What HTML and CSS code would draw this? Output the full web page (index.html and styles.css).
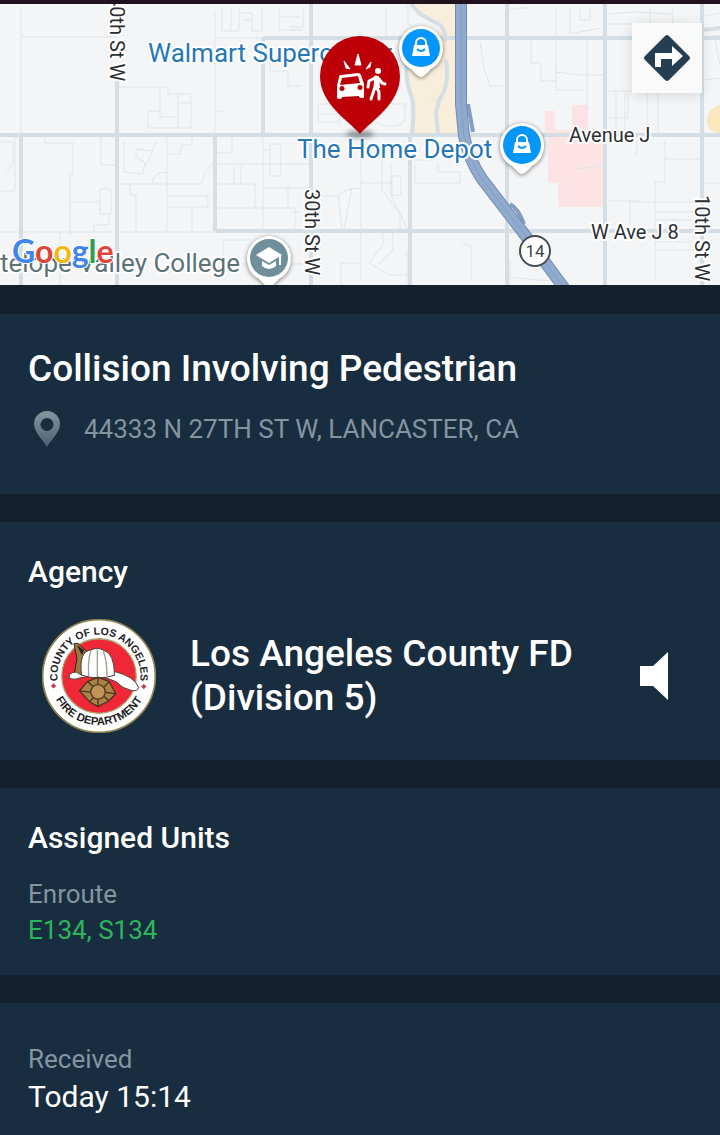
FILE: index.html
```html
<!DOCTYPE html>
<html lang="en">
<head>
    <meta charset="utf-8">
    <meta name="viewport" content="width=device-width, initial-scale=1">
    <title>Incident</title>
    <link rel="stylesheet" href="styles.css">
</head>
<body>
    <div class="map">
        <svg class="map-canvas" viewBox="0 4 720 281" role="img" aria-label="Map">
            <defs>
                <g id="shop-pin">
                    <path class="poi-shape" d="M0 29C-3 29-6 25-10 21C-18 17-22 9-22 0A22 22 0 0 1 22 0C22 9 18 17 10 21C6 25 3 29 0 29Z"/>
                    <circle r="19" fill="#0596fb"/>
                    <path d="M-7-3H7L9 8H-9Z" fill="#fff"/>
                    <path d="M-5-2V-5A5 5 0 0 1 5-5V-2" fill="none" stroke="#fff" stroke-width="2"/>
                    <path d="M-4 1Q0 5 4 1" fill="none" stroke="#0596fb" stroke-width="2"/>
                </g>
                <filter id="blur" x="-50%" y="-100%" width="200%" height="300%">
                    <feGaussianBlur stdDeviation="2.5"/>
                </filter>
            </defs>

            <rect y="4" width="720" height="281" fill="#f4f5f6"/>

            <!-- areas -->
            <path d="M411 4H456V100L458 135H409L412 105L407 85L409 60L440 28Z" fill="#f7eedb"/>
            <path d="M545 111H555V130H572V105H588V135H604V207H558V183H548V135H545Z" fill="#fde3e3"/>
            <path d="M720 105Q708 108 707 120Q707 131 720 134Z" fill="#fbe7bd"/>

            <!-- minor streets -->
            <g class="street">
                <path d="M21 8V135M21 37H117M119 87H168V94H191V128H148V111H160M160 87V117H178M178 94V128M178 103H191M215 13V135M215 111H224M215 38H263M222 8V31H239V8M231 8V31M241 13H252V31H262V8M252 20H243M279 8V30H300M279 17H300M270 62V71H288V86H300"/>
                <path d="M45 136V143H73V174H70V235M70 202H99M100 189H111V214H100ZM109 214V225H94V232M0 142H13V165L5 172M15 135V191H0M101 135V165H115M124 140V172L143 174L145 163L136 157V149L153 151M156 140Q152 157 144 167M152 183Q153 172 167 172M167 135V231M117 184H201L205 173L213 163M130 184V195H136V231M120 232H215M0 232H117M167 196H208V207H167M192 207V231M167 154H181V145H192V138"/>
                <path d="M217 153H232V135M217 164H300M234 166V184M241 166V184M255 184V208M217 184H255M263 135V231M217 208H295V231M263 188H311M270 144H281V176H270ZM263 150H270M288 188V208M223 264V240H252M60 232V285M223 264H311"/>
                <path d="M290 27H303V8M290 30H303M386 8V35L389 38M318 104H340V122H318ZM317 114H350M319 86H340M375 122Q395 132 405 120V104H380M315 196H338L342 230M338 196Q345 188 360 188M352 188L344 230M361 150V280M361 183H392M382 150V190L400 214V231M391 165V195L408 230M383 231V245L369 263M393 231V250L378 265M392 176H401V195H392ZM415 165V183H460V172H438V163M341 285V263H360M369 263L390 275H410M462 245H471V280"/>
                <path d="M480 42L484 68L490 86H507M510 10Q520 7 528 8M531 40V63H541V81H556M556 8V90H584M556 72L580 75H603M570 8V34L600 28M580 8V20H590V8M587 40V110M608 14L635 12L672 14M608 24H632M650 8V24M673 8V30M608 91H702M616 91V135M625 91V135M608 118H628V91M658 91V135M647 91V135M705 16L720 13M708 37L720 35M714 35L720 65M705 80L720 78"/>
                <path d="M576 169L602 166M637 140V155M665 140V182H655V280M630 202H702M630 202V225M655 212H695M655 220H695M655 242H695M655 250H695M665 159H702M702 183H720M608 201H640M414 160H430M290 212H300M290 164H311M507 277L550 281M510 260V285"/>
                <path d="M408 4V24L420 33M430 100H446M407 250V285"/>
            </g>

            <!-- main roads -->
            <g class="road">
                <path d="M263 38H720M0 135H720M215 231H720"/>
                <path d="M21 135V285M117 80V285M215 135V231M263 38V135M311 4V285M410 135V285M507 4V285M605 4V285M702 4V285"/>
                <path d="M411 4L420 14L440 25Q446 30 445 42M407 62Q405 80 411 95Q415 105 412 135M446 60Q450 85 440 98L436 112L438 135"/>
                <path d="M702 30L720 28"/>
            </g>

            <!-- highway -->
            <path class="ramp" d="M458 104L461 138M468 104L473 132M510 204Q518 208 524 224"/>
            <path class="highway-edge" d="M461 4V104L464 136Q469 160 482 179L525 235L567 292"/>
            <path class="highway" d="M461 4V104L464 136Q469 160 482 179L525 235L567 292"/>
            <path class="highway-edge divider" d="M461 4V104L464 136Q469 160 482 179L525 235L567 292"/>

            <!-- labels -->
            <text class="road-label" transform="translate(110 -5) rotate(90)">40th St W</text>
            <text class="road-label" transform="translate(305 189) rotate(90)">30th St W</text>
            <text class="road-label" transform="translate(695 195) rotate(90)">10th St W</text>
            <text class="road-label" x="569" y="142">Avenue J</text>
            <text class="road-label" x="591" y="239">W Ave J 8</text>
            <text class="place-label shop" x="148" y="62">Walmart Supercenter</text>
            <text class="place-label shop" x="297" y="158">The Home Depot</text>
            <text class="place-label school" x="240" y="272" text-anchor="end">Antelope Valley College</text>

            <circle cx="535" cy="251" r="15" fill="#fff" stroke="#444c50" stroke-width="2"/>
            <text class="shield" x="535" y="257" text-anchor="middle">14</text>

            <use href="#shop-pin" x="421" y="48"/>
            <use href="#shop-pin" x="522" y="145"/>

            <g transform="translate(269 258)">
                <path class="poi-shape" d="M0 29C-3 29-6 25-10 21C-18 17-22 9-22 0A22 22 0 0 1 22 0C22 9 18 17 10 21C6 25 3 29 0 29Z"/>
                <circle r="19" fill="#6f909b"/>
                <path d="M-13-3L0-11L13-3L0 5Z" fill="#fff"/>
                <path d="M-7 3L0 7L7 3V8Q0 14-7 8Z" fill="#fff"/>
                <path d="M11-3V7" stroke="#fff" stroke-width="2"/>
            </g>

            <!-- incident marker -->
            <ellipse cx="360" cy="134" rx="14" ry="4" fill="#000" opacity=".35" filter="url(#blur)"/>
            <path d="M360 134C348 120 320 104 320 76A40 40 0 0 1 400 76C400 104 372 120 360 134Z" fill="#bd0008"/>
            <g fill="#fff">
                <path d="M344 61L350 69L346 68ZM358 54L361 65H355ZM371 62L370 67L366 69Z" stroke="#fff"/>
                <path fill-rule="evenodd" d="M341 75L358 73Q360 73 361 75L364 84V97Q364 98 362 98Q359 98 359 96L342 97V98Q341 99 339 99Q337 99 337 97V86L339 77Q339 75 341 75ZM342 78L340 85L360 83L358 76ZM342 86A2 2 0 1 0 342 91A2 2 0 1 0 342 86ZM360 85A2 2 0 1 0 360 90A2 2 0 1 0 360 85Z"/>
                <circle cx="378" cy="71" r="3"/>
            </g>
            <path d="M376 77L375 87L371 99M377 88L379 92V99M375 78L369 81L368 87M379 79L382 83L385 84" fill="none" stroke="#fff" stroke-width="3" stroke-linecap="round" stroke-linejoin="round"/>
            <path d="M374 76H379L380 88H374Z" fill="#fff"/>

            <text class="google" x="12" y="263"><tspan fill="#4285e8">G</tspan><tspan fill="#de4437">o</tspan><tspan fill="#f0b910">o</tspan><tspan fill="#4285e8">g</tspan><tspan fill="#2f9e4f">l</tspan><tspan fill="#de4437">e</tspan></text>
        </svg>

        <button type="button" class="directions" aria-label="Directions">
            <svg width="48" height="48" viewBox="0 0 48 48">
                <path d="M22 2Q24 0 26 2L46 22Q48 24 46 26L26 46Q24 48 22 46L2 26Q0 24 2 22Z" fill="#263e52"/>
                <path d="M12 33V19H29V12L40 22L29 32V25H18V33Z" fill="#fff"/>
            </svg>
        </button>
    </div>

    <main class="details">
        <section class="card incident">
            <h1>Collision Involving Pedestrian</h1>
            <p class="address">
                <svg width="26" height="36" viewBox="0 0 26 36" aria-hidden="true">
                    <defs>
                        <linearGradient id="pin-fade" x1="0" y1="0" x2="0" y2="1">
                            <stop offset="0" stop-color="#8795a1"/>
                            <stop offset="1" stop-color="#4a6071"/>
                        </linearGradient>
                    </defs>
                    <path fill="url(#pin-fade)" fill-rule="evenodd" d="M13 0A13 13 0 0 1 26 13C26 21 17 29 13 36C9 29 0 21 0 13A13 13 0 0 1 13 0ZM13 7A6 6 0 1 0 13 20A6 6 0 1 0 13 7Z"/>
                </svg>
                <span>44333 N 27TH ST W, LANCASTER, CA</span>
            </p>
        </section>

        <section class="card agency">
            <h2>Agency</h2>
            <div class="agency-row">
                <svg class="seal" viewBox="0 0 346 346" role="img" aria-label="Department seal">
                    <defs>
                        <path id="arc-top" d="M51 205A126 126 0 1 1 295 205"/>
                        <path id="arc-bottom" d="M24 173A149 149 0 0 0 322 173"/>
                    </defs>
                    <circle cx="173" cy="173" r="171" fill="#fff" stroke="#8d8555" stroke-width="5"/>
                    <circle cx="173" cy="173" r="113" fill="#f02736" stroke="#b0a070" stroke-width="4"/>
                    <text class="seal-text"><textPath href="#arc-top" startOffset="50%" text-anchor="middle">COUNTY OF LOS ANGELES</textPath></text>
                    <text class="seal-text lower"><textPath href="#arc-bottom" startOffset="50%" text-anchor="middle">FIRE DEPARTMENT</textPath></text>
                    <path d="M35 195L43 203L35 211L27 203ZM309 197L317 205L309 213L301 205Z" fill="#cc3852"/>
                    <path d="M97 75L109 74L136 98L118 175L98 168L106 120Z" fill="#9c7c43" stroke="#27221b" stroke-width="3"/>
                    <path d="M106 80L128 95L121 110Z" fill="#27221b"/>
                    <path d="M83 178Q80 162 104 161L120 170L222 160Q280 174 293 207Q292 221 272 217Q245 212 224 190Q170 165 114 179Q95 187 83 178Z" fill="#fff" stroke="#4b3b31" stroke-width="3"/>
                    <path d="M120 170Q111 98 149 94Q168 84 185 94Q220 102 220 171Q170 187 120 170Z" fill="#fff" stroke="#4b3b31" stroke-width="3"/>
                    <path d="M148 98Q138 130 142 173M168 92V176M186 98Q198 130 197 173" fill="none" stroke="#a59d91" stroke-width="4"/>
                    <path d="M138 190L170 177L204 190L224 227L203 248L170 266L144 251L114 218Z" fill="#ad8248" stroke="#49331d" stroke-width="4"/>
                    <path d="M138 190L203 248M204 190L144 251M170 177V198M170 240V266M114 218L148 222M190 222L224 227" stroke="#49331d" stroke-width="4"/>
                    <circle cx="170" cy="221" r="22" fill="#be9459" stroke="#593b20" stroke-width="4"/>
                </svg>
                <p class="agency-name">Los Angeles County FD (Division 5)</p>
                <button type="button" class="listen" aria-label="Listen">
                    <svg width="28" height="48" viewBox="0 0 28 48">
                        <path d="M0 14H13L28 0V48L13 34H0Z" fill="#fff"/>
                    </svg>
                </button>
            </div>
        </section>

        <section class="card units">
            <h2>Assigned Units</h2>
            <p class="label">Enroute</p>
            <p class="unit-list">E134, S134</p>
        </section>

        <section class="card received">
            <p class="label">Received</p>
            <p class="time">Today 15:14</p>
        </section>
    </main>
</body>
</html>
```
FILE: styles.css
```css
* {
    box-sizing: border-box;
}

body {
    margin: 0;
    border-top: 4px solid #21121f;
    background-color: #182d3f;
    color: #fff;
    font-family: Roboto, sans-serif;
}

h1, h2, p {
    margin: 0;
    font-weight: 500;
}

button {
    padding: 0;
    border: 0;
    background: none;
    cursor: pointer;
}

svg {
    display: block;
}

/* map */
.map {
    position: relative;
}

.map-canvas {
    width: 100%;
    height: auto;
}

.street {
    fill: none;
    stroke: #e1e5e8;
    stroke-width: 1;
}

.road {
    fill: none;
    stroke: #d5dee4;
    stroke-width: 4;
}

.highway,
.highway-edge,
.ramp {
    fill: none;
    stroke: #91abcf;
    stroke-width: 10;
    stroke-linejoin: round;
}

.highway-edge {
    stroke: #738cb0;
    stroke-width: 12;
}

.highway-edge.divider {
    stroke: #839dc3;
    stroke-width: 1;
}

.ramp {
    stroke: #839dc3;
    stroke-width: 4;
}

.road-label,
.place-label {
    font-size: 20px;
    fill: #2b2f33;
    stroke: #fff;
    stroke-width: 4;
    stroke-linejoin: round;
    paint-order: stroke;
}

.place-label {
    font-size: 26px;
}

.shop {
    fill: #2577b8;
}

.school {
    fill: #5b7278;
}

.shield {
    font-size: 17px;
    fill: #3c4347;
}

.poi-shape {
    fill: #fff;
    filter: drop-shadow(0 1px 2px rgba(0, 0, 0, 0.5));
}

.google {
    font-family: Lato, sans-serif;
    font-size: 32px;
    font-weight: 700;
    stroke: #fff;
    stroke-width: 2;
    paint-order: stroke;
}

.directions {
    position: absolute;
    top: 19px;
    right: 18px;
    display: grid;
    place-items: center;
    width: 70px;
    height: 70px;
    background-color: rgba(250, 250, 250, 0.95);
    box-shadow: 0 2px 12px rgba(0, 0, 0, 0.12);
}

/* cards */
.details {
    display: flex;
    flex-direction: column;
    gap: 28px;
    padding-top: 29px;
    background-color: #12212d;
}

.card {
    padding: 32px 28px;
    background-color: #182d3f;
}

.incident {
    padding-bottom: 46px;
}

h1 {
    font-size: 37px;
    line-height: 46px;
}

h2 {
    font-size: 30px;
    line-height: 36px;
}

.address {
    display: flex;
    align-items: center;
    gap: 24px;
    margin-top: 18px;
    padding-left: 6px;
    color: #8494a1;
    font-size: 26px;
    font-weight: 400;
    line-height: 38px;
}

.agency {
    padding-bottom: 27px;
}

.agency-row {
    display: flex;
    align-items: center;
    gap: 34px;
    margin-top: 29px;
    padding: 0 24px 0 14px;
}

.seal {
    flex: none;
    width: 114px;
    height: 114px;
}

.seal-text {
    font-family: "Liberation Sans", sans-serif;
    font-size: 32px;
    font-weight: 700;
    fill: #1d1d1f;
}

.seal-text.lower {
    font-size: 34px;
}

.agency-name {
    flex: 1;
    font-size: 37px;
    line-height: 44px;
}

.listen {
    flex: none;
}

.label,
.unit-list,
.time {
    font-size: 26px;
    font-weight: 400;
    line-height: 36px;
}

.label {
    color: #8494a1;
}

.units {
    padding-bottom: 27px;
}

.units .label {
    margin-top: 20px;
}

.unit-list {
    color: #2bb55c;
}

.received {
    padding-top: 38px;
    padding-bottom: 18px;
}

.time {
    font-size: 30px;
    line-height: 40px;
}
```
